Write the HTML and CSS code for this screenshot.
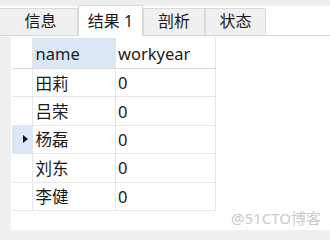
FILE: index.html
```html
<!DOCTYPE html>
<html lang="zh">
<head>
<meta charset="utf-8">
<link rel="stylesheet" href="styles.css">
</head>
<body>
<div class="app">
  <div class="topstrip"></div>
  <div class="tabbar">
    <div class="tab t1">信息</div>
    <div class="tab active t2">结果 1</div>
    <div class="tab t3">剖析</div>
    <div class="tab t4">状态</div>
  </div>
  <div class="body">
    <div class="panel">
      <div class="grid">
        <div class="row head">
          <div class="ind"></div>
          <div class="c1 sel">name</div>
          <div class="c2">workyear</div>
        </div>
        <div class="row"><div class="ind"></div><div class="c1">田莉</div><div class="c2">0</div></div>
        <div class="row"><div class="ind"></div><div class="c1">吕荣</div><div class="c2">0</div></div>
        <div class="row"><div class="ind cur"><span class="tri"></span></div><div class="c1">杨磊</div><div class="c2">0</div></div>
        <div class="row"><div class="ind"></div><div class="c1">刘东</div><div class="c2">0</div></div>
        <div class="row"><div class="ind"></div><div class="c1">李健</div><div class="c2">0</div></div>
      </div>
      <div class="wm">@51CTO博客</div>
    </div>
  </div>
</div>
</body>
</html>
```
FILE: styles.css
```css
html, body {
  margin: 0;
  padding: 0;
}
body {
  width: 330px;
  height: 238px;
  background: #f0f0f0;
  font-family: "Noto Sans", "Noto Sans CJK SC", sans-serif;
  color: #1b1b1b;
  overflow: hidden;
}
.app {
  display: flex;
  flex-direction: column;
  height: 238px;
}
.topstrip {
  height: 6px;
  background: #ededed;
}
.tabbar {
  height: 29px;
  background: #ffffff;
  border-bottom: 1px solid #d6d6d6;
  display: flex;
  align-items: flex-end;
}
.tab {
  box-sizing: border-box;
  height: 28px;
  margin-bottom: -1px;
  background: #f0f0f0;
  border: 1px solid #dadada;
  border-bottom: 1px solid #d6d6d6;
  font-size: 16px;
  line-height: 24px;
  display: flex;
  justify-content: center;
}
.t1 { width: 78px; border-left: none; padding-left: 4px; }
.t2 { width: 65px; }
.t3 { width: 62px; }
.t4 { width: 61px; }
.tab.active {
  background: #ffffff;
  height: 31px;
  border-color: #d6d6d6;
  border-bottom: 1px solid #ffffff;
  line-height: 30px;
  position: relative;
  z-index: 1;
}
.body {
  flex: 1;
  padding: 0 0 8px 11px;
  display: flex;
}
.panel {
  flex: 1;
  background: #ffffff;
  position: relative;
  padding-top: 2px;
}
.grid {
  margin-left: 1px;
  width: 204px;
  font-size: 16.5px;
}
.row {
  display: flex;
  height: 28.4px;
  box-sizing: border-box;
  border-bottom: 1px solid #e6e6e6;
}
.row.head {
  height: 31px;
  border-bottom: 1px solid #dcdcdc;
}
.ind {
  width: 20px;
  border-right: 1px solid #e6e6e6;
  display: flex;
  align-items: center;
  justify-content: flex-start;
}
.ind.cur {
  background: #dce8f5;
}
.tri {
  width: 0;
  height: 0;
  margin-left: 11px;
  border-top: 4.5px solid transparent;
  border-bottom: 4.5px solid transparent;
  border-left: 5px solid #111111;
}
.c1 {
  width: 81px;
  border-right: 1px solid #e6e6e6;
  padding-left: 3px;
  display: flex;
  align-items: center;
}
.c2 {
  width: 99px;
  border-right: 1px solid #e6e6e6;
  padding-left: 2px;
  display: flex;
  align-items: center;
}
.c1.sel {
  background: #dae8f6;
}
.wm {
  position: absolute;
  right: 9px;
  bottom: 2px;
  font-size: 15px;
  color: #cbcbcb;
  font-family: "Noto Sans", "Noto Sans CJK SC", sans-serif;
}
```
